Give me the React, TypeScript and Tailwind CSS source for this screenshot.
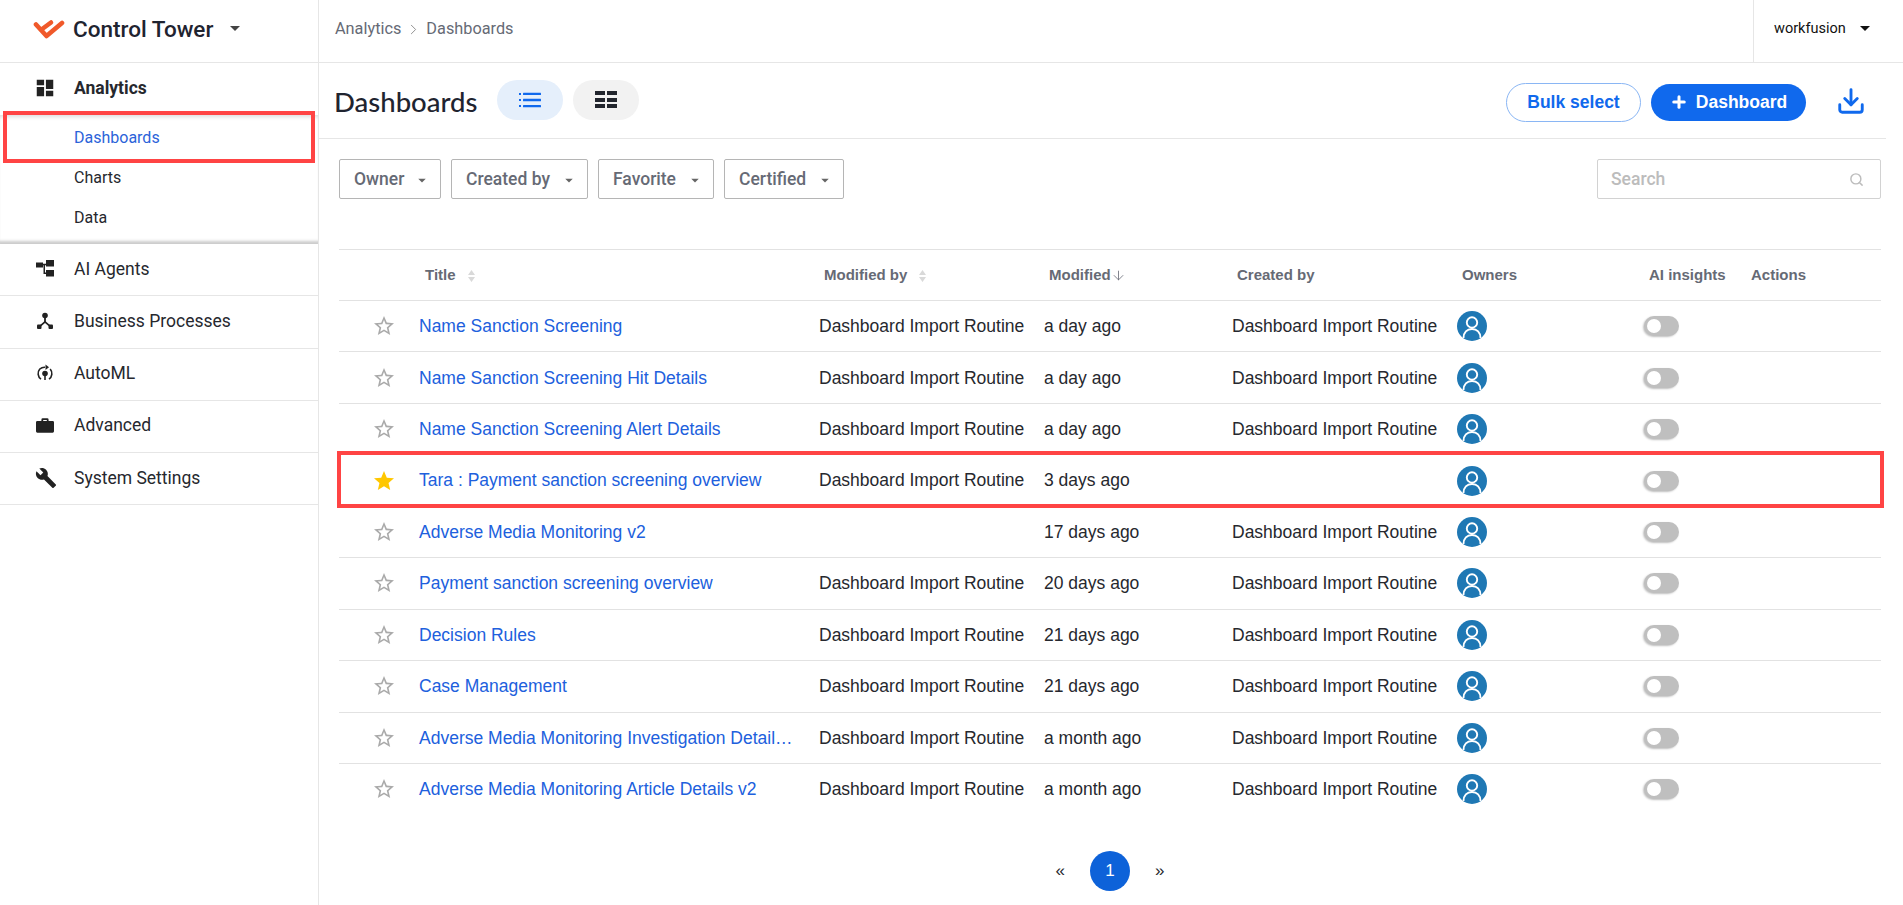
import { Plus, Search, Download, ChevronRight, ArrowDown } from "lucide-react";
import { MdDashboard, MdBuild, MdStar, MdStarBorder } from "react-icons/md";

const rows = [
	{ title: "Name Sanction Screening", modifiedBy: "Dashboard Import Routine", modified: "a day ago", createdBy: "Dashboard Import Routine", starred: false },
	{ title: "Name Sanction Screening Hit Details", modifiedBy: "Dashboard Import Routine", modified: "a day ago", createdBy: "Dashboard Import Routine", starred: false },
	{ title: "Name Sanction Screening Alert Details", modifiedBy: "Dashboard Import Routine", modified: "a day ago", createdBy: "Dashboard Import Routine", starred: false },
	{ title: "Tara : Payment sanction screening overview", modifiedBy: "Dashboard Import Routine", modified: "3 days ago", createdBy: "", starred: true },
	{ title: "Adverse Media Monitoring v2", modifiedBy: "", modified: "17 days ago", createdBy: "Dashboard Import Routine", starred: false },
	{ title: "Payment sanction screening overview", modifiedBy: "Dashboard Import Routine", modified: "20 days ago", createdBy: "Dashboard Import Routine", starred: false },
	{ title: "Decision Rules", modifiedBy: "Dashboard Import Routine", modified: "21 days ago", createdBy: "Dashboard Import Routine", starred: false },
	{ title: "Case Management", modifiedBy: "Dashboard Import Routine", modified: "21 days ago", createdBy: "Dashboard Import Routine", starred: false },
	{ title: "Adverse Media Monitoring Investigation Details v2", modifiedBy: "Dashboard Import Routine", modified: "a month ago", createdBy: "Dashboard Import Routine", starred: false },
	{ title: "Adverse Media Monitoring Article Details v2", modifiedBy: "Dashboard Import Routine", modified: "a month ago", createdBy: "Dashboard Import Routine", starred: false },
];

function Caret({ className }: { className: string }) {
	return <span className={`inline-block w-0 h-0 border-x-[5px] border-x-transparent border-t-[5px] ${className}`} />;
}

function SortIcon() {
	return (
		<svg width="7" height="12" viewBox="0 0 7 12" className="ml-3 inline-block">
			<path d="M3.5 0 7 5H0zM3.5 12 0 7h7z" fill="#d9d9d9" />
		</svg>
	);
}

function TreeIcon() {
	return (
		<svg width="18" height="17" viewBox="0 0 18 17" fill="#222">
			<rect x="0" y="2.500" width="7" height="5" />
			<rect x="10" y="0" width="8" height="6.500" />
			<rect x="10" y="10" width="8" height="6.500" />
			<path d="M6 3.800h5v1.500H9V12.500h2V14H7.500V5.300H6z" />
		</svg>
	);
}

function ProcessIcon() {
	return (
		<svg width="18" height="18" viewBox="0 0 18 18" fill="#222">
			<circle cx="9" cy="3.500" r="2.800" />
			<rect x="8.100" y="5" width="1.800" height="5" />
			<path d="M9 8.800 3.500 13.500l1.100 1.200L9 11l4.400 3.700 1.100-1.200z" />
			<rect x="1" y="12.500" width="4.500" height="4.500" rx="1" />
			<rect x="12.500" y="12.500" width="4.500" height="4.500" rx="1" />
		</svg>
	);
}

function AutoMlIcon() {
	return (
		<svg width="18" height="18" viewBox="0 0 18 18" fill="none" stroke="#222" strokeWidth="1.600">
			<path d="M5 15.200A7 7 0 0 1 3.800 5 7 7 0 0 1 9 3.200" />
			<path d="M13 15.200A7 7 0 0 0 14.200 5" />
			<path d="M9.500 0.500 13 3.200 9.500 6z" fill="#222" stroke="none" />
			<circle cx="9" cy="9.500" r="2.800" fill="#222" stroke="none" />
			<path d="M9 11v5" />
		</svg>
	);
}

function BriefcaseIcon() {
	return (
		<svg width="18" height="17" viewBox="0 0 20 18" fill="#222">
			<path d="M6 4V2.500A1.500 1.500 0 0 1 7.500 1h5A1.500 1.500 0 0 1 14 2.500V4h4.500A1.500 1.500 0 0 1 20 5.500v10a1.500 1.500 0 0 1-1.500 1.500h-17A1.500 1.500 0 0 1 0 15.500v-10A1.500 1.500 0 0 1 1.500 4zm2-1v1h4V3z" fillRule="evenodd" />
		</svg>
	);
}

function ListIcon() {
	return (
		<svg width="22" height="16" viewBox="0 0 22 16" fill="#1069ed">
			<rect x="0" y="1" width="2" height="2" />
			<rect x="0" y="7" width="2" height="2" />
			<rect x="0" y="13" width="2" height="2" />
			<rect x="4" y="0.700" width="18" height="2.400" rx="0.500" />
			<rect x="4" y="6.800" width="18" height="2.400" rx="0.500" />
			<rect x="4" y="12.900" width="18" height="2.400" rx="0.500" />
		</svg>
	);
}

function Logo() {
	return (
		<svg width="32" height="22" viewBox="0 0 32 22" fill="none" stroke="#f0592a" strokeWidth="4.600" strokeLinecap="round" strokeLinejoin="round">
			<path d="M3 5.500 13.500 17 29 4" />
			<path d="M8.500 10.500 18 3.500" />
		</svg>
	);
}

function Avatar() {
	return (
		<span className="w-[30px] h-[30px] rounded-full bg-[#1f78b4] overflow-hidden flex items-center justify-center">
			<svg width="30" height="30" viewBox="0 0 30 30" fill="none" stroke="#fff" strokeWidth="1.900">
				<circle cx="15" cy="11.500" r="5.200" />
				<path d="M6.500 27c0-5.500 3.500-9 8.500-9s8.500 3.500 8.500 9" />
			</svg>
		</span>
	);
}

function Toggle() {
	return (
		<span className="relative block w-[35px] h-5 rounded-full bg-[#bfbfbf] shadow-[-1px_1px_2px_rgba(0,0,0,0.25)]">
			<span className="absolute left-[3px] top-[3px] w-[14px] h-[14px] rounded-full bg-white" />
		</span>
	);
}

function FilterButton({ label, width }: { label: string; width: string }) {
	return (
		<div className={`h-10 ${width} border border-[#b5b5b5] rounded-[2px] flex items-center justify-between pl-[14px] pr-[13px] text-[17.500px] font-medium text-[#666a75]`}>
			<span>{label}</span>
			<Caret className="border-t-[#666] mt-[3px] scale-75" />
		</div>
	);
}

function NavRow({ icon, label }: { icon: React.ReactNode; label: string }) {
	return (
		<div className="h-[52.250px] pb-[2px] border-b border-[#e6e6e6] flex items-center text-[17.500px] text-[#26282e]">
			<span className="w-[74px] pl-[36px] flex items-center">{icon}</span>
			<span>{label}</span>
		</div>
	);
}

export default function App() {
	return (
		<div className="relative h-[905px] overflow-hidden bg-white font-['Roboto',sans-serif] flex flex-col">
			<div className="h-[63px] shrink-0 border-b border-[#e6e6e6] flex">
				<div className="w-[319px] shrink-0 border-r border-[#e6e6e6] flex items-center pl-[33px] pb-[2px]">
					<Logo />
					<span className="ml-[8px] text-[22.500px] font-medium text-[#1f2430]">Control Tower</span>
					<Caret className="border-t-[#444] ml-[17px] mb-[4px]" />
				</div>
				<div className="grow flex items-center pl-[16px] pb-[3px] text-[16.300px] text-[#666a75]">
					<span>Analytics</span>
					<ChevronRight size={17} strokeWidth={1.3} className="mx-[4px] text-[#888]" />
					<span>Dashboards</span>
				</div>
				<div className="w-[150px] shrink-0 border-l border-[#e6e6e6] flex items-center pl-[20px] pb-[5px] text-[14.500px] text-[#111]">
					<span>workfusion</span>
					<Caret className="border-t-[#111] ml-[14px]" />
				</div>
			</div>
			<div className="grow flex min-h-0">
				<div className="w-[319px] shrink-0 border-r border-[#e6e6e6]">
					<div className="h-[52px] pb-[2px] flex items-center text-[17.500px] font-bold text-[#26282e]">
						<span className="w-[74px] pl-[34px] flex items-center">
							<MdDashboard size={22} className="-scale-x-100 text-[#222]" />
						</span>
						<span>Analytics</span>
					</div>
					<div className="h-[129px] shadow-[inset_0_5px_4px_-3px_#ddd,inset_0_-5px_3px_-2px_#ccc] pt-[3px] text-[16px]">
						<div className="h-10 flex items-center pl-[74px] text-[#2b63d9]">Dashboards</div>
						<div className="h-10 flex items-center pl-[74px] text-[#26282e]">Charts</div>
						<div className="h-10 flex items-center pl-[74px] text-[#26282e]">Data</div>
					</div>
					<NavRow icon={<TreeIcon />} label="AI Agents" />
					<NavRow icon={<ProcessIcon />} label="Business Processes" />
					<NavRow icon={<AutoMlIcon />} label="AutoML" />
					<NavRow icon={<BriefcaseIcon />} label="Advanced" />
					<NavRow icon={<MdBuild size={22} className="text-[#222] -ml-[1px]" />} label="System Settings" />
				</div>
				<div className="grow min-w-0">
					<div className="h-[76px] mr-[17px] border-b border-[#e6e6e6] flex items-center pl-[15px]">
						<span className="text-[27.500px] font-medium font-['Lato',sans-serif] text-[#1f2430] pt-[2px]">Dashboards</span>
						<span className="ml-[20px] mb-[2px] w-[66px] h-10 rounded-[20px] bg-[#e5effb] flex items-center justify-center">
							<ListIcon />
						</span>
						<span className="ml-[10px] mb-[2px] w-[66px] h-10 rounded-[20px] bg-[#f2f2f2] grid grid-cols-2 gap-x-[2px] gap-y-[2.500px] content-center justify-center">
							<span className="w-[10px] h-[4px] bg-[#22262e] justify-self-end" />
							<span className="w-[10px] h-[4px] bg-[#22262e]" />
							<span className="w-[10px] h-[4px] bg-[#22262e] justify-self-end" />
							<span className="w-[10px] h-[4px] bg-[#22262e]" />
							<span className="w-[10px] h-[4px] bg-[#22262e] justify-self-end" />
							<span className="w-[10px] h-[4px] bg-[#22262e]" />
						</span>
						<span className="ml-auto mt-[3px] w-[135px] h-[39px] rounded-[20px] border border-[#8ab6f4] flex items-center justify-center text-[17.500px] font-['Liberation_Sans',sans-serif] font-bold text-[#1069ed]">Bulk select</span>
						<span className="ml-[10px] mt-[3px] w-[155px] h-[37px] rounded-[19px] bg-[#1069ed] flex items-center justify-center gap-[8px] text-[17.500px] font-['Liberation_Sans',sans-serif] font-bold text-white">
							<Plus size={18} strokeWidth={4} />
							Dashboard
						</span>
						<Download size={30} strokeWidth={2.300} className="ml-[30px] mr-[20px] text-[#1069ed]" />
					</div>
					<div className="pl-[20px] pr-[22px] pt-[20px]">
						<div className="flex gap-[10px]">
							<FilterButton label="Owner" width="w-[102px]" />
							<FilterButton label="Created by" width="w-[137px]" />
							<FilterButton label="Favorite" width="w-[116px]" />
							<FilterButton label="Certified" width="w-[120px]" />
							<div className="ml-auto w-[284px] h-10 border border-[#d2d2d2] rounded-[2px] flex items-center justify-between pl-[13px] pr-[16px] text-[17.500px] font-medium text-[#bcbcbc]">
								<span>Search</span>
								<Search size={15} strokeWidth={2.300} className="text-[#bcbcbc]" />
							</div>
						</div>
						<table className="mt-[50px] w-full table-fixed border-collapse font-['Liberation_Sans',sans-serif] text-[17.500px] text-[#26282e]">
							<colgroup>
								<col className="w-[75px]" />
								<col className="w-[400px]" />
								<col className="w-[225px]" />
								<col className="w-[188px]" />
								<col className="w-[225px]" />
								<col className="w-[177px]" />
								<col className="w-[117px]" />
								<col />
							</colgroup>
							<thead>
								<tr className="h-[51px] border-y border-[#e2e2e2] text-[15px] font-bold text-[#666a75] text-left">
									<th />
									<th className="pl-[11px]">Title<SortIcon /></th>
									<th className="pl-[10px]">Modified by<SortIcon /></th>
									<th className="pl-[10px]">
										<span className="inline-flex items-center">Modified<ArrowDown size={15} strokeWidth={1.300} /></span>
									</th>
									<th className="pl-[10px]">Created by</th>
									<th className="pl-[10px]">Owners</th>
									<th className="pl-[20px] whitespace-nowrap">AI insights</th>
									<th className="pl-[5px]">Actions</th>
								</tr>
							</thead>
							<tbody>
								{rows.map((row, i) => (
									<tr key={row.title} className={`h-[51.450px] ${i < rows.length - 1 ? "border-b border-[#e2e2e2]" : ""}`}>
										<td className="pl-[33px]">
											{row.starred ? (
												<MdStar size={24} className="text-[#ffc700]" />
											) : (
												<MdStarBorder size={24} className="text-[#aaa]" />
											)}
										</td>
										<td className="pl-[5px] pr-[20px] truncate text-[#2060dd]">{row.title}</td>
										<td className="pl-[5px] truncate">{row.modifiedBy}</td>
										<td className="pl-[5px]">{row.modified}</td>
										<td className="pl-[5px] truncate">{row.createdBy}</td>
										<td className="pl-[5px]"><Avatar /></td>
										<td className="pl-[15px]"><Toggle /></td>
										<td />
									</tr>
								))}
							</tbody>
						</table>
						<div className="mt-[36px] flex items-center justify-center font-['Liberation_Sans',sans-serif] text-[17px] text-[#26282e]">
							<span>«</span>
							<span className="ml-[25px] mr-[25px] w-10 h-10 rounded-full bg-[#0d62d9] text-white flex items-center justify-center">1</span>
							<span>»</span>
						</div>
					</div>
				</div>
			</div>
			<div className="absolute left-[3px] top-[111px] w-[312px] h-[52px] border-4 border-[#ff4444]" />
			<div className="absolute left-[337px] top-[451px] w-[1547px] h-[57px] border-4 border-[#ff4444]" />
		</div>
	);
}
